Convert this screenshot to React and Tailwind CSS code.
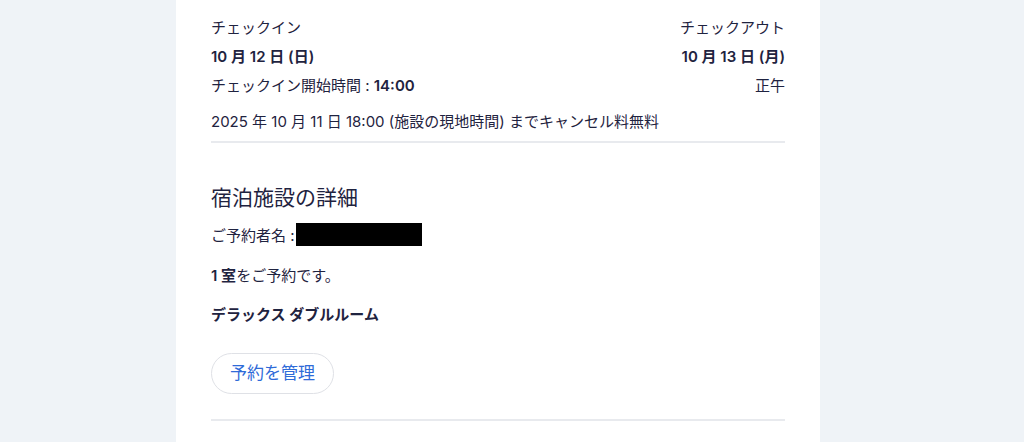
export default function App() {
  const font = { fontFamily: 'Inter, "Noto Sans CJK JP", sans-serif' };
  return (
    <div className="w-[1024px] h-[442px] bg-[#eff3f7] flex pl-[176px] overflow-hidden" style={font}>
      <div className="w-[644px] bg-white px-[35px] text-[#1f2340] text-[15px]">
        <div className="flex justify-between pt-[17px]">
          <div className="flex flex-col">
            <div className="h-[29px] leading-[22px]">チェックイン</div>
            <div className="h-[29px] leading-[22px] font-semibold">10 月 12 日 (日)</div>
            <div className="h-[29px] leading-[22px]">チェックイン開始時間 : <span className="font-semibold">14:00</span></div>
          </div>
          <div className="flex flex-col items-end">
            <div className="h-[29px] leading-[22px]">チェックアウト</div>
            <div className="h-[29px] leading-[22px] font-semibold">10 月 13 日 (月)</div>
            <div className="h-[29px] leading-[22px]">正午</div>
          </div>
        </div>
        <div className="pt-[7px] leading-[22px]">2025 年 10 月 11 日 18:00 (施設の現地時間) までキャンセル料無料</div>
        <div className="mt-[8px] h-[2px] bg-[#e8eaee]" />
        <div className="pt-[41px] text-[21px] leading-[28px]">宿泊施設の詳細</div>
        <div className="mt-[12px] flex items-center h-[24px]">
          <span>ご予約者名 :</span>
          <span className="ml-[1px] inline-block w-[126px] h-[23px] bg-black -translate-y-[2px]" />
        </div>
        <div className="mt-[17px] leading-[22px]"><span className="font-semibold">1 室</span>をご予約です。</div>
        <div className="mt-[17px] leading-[22px] font-semibold">デラックス ダブルルーム</div>
        <div className="mt-[27px]">
          <button className="h-[41px] px-[18px] rounded-full border border-[#dfe1e6] bg-white text-[#2f6bd8] text-[17px]">予約を管理</button>
        </div>
        <div className="mt-[25px] h-[2px] bg-[#e8eaee]" />
      </div>
    </div>
  );
}
